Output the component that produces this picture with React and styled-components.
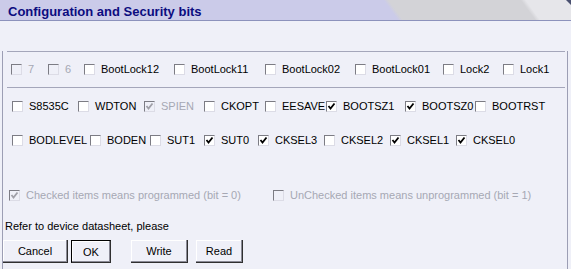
import styled, { createGlobalStyle } from 'styled-components';

const GlobalStyle = createGlobalStyle`
  body {
    margin: 0;
    background: #eff0f8;
    font-family: "Liberation Sans", Arial, sans-serif;
  }
`;

const lockBits = [
  { label: '7', w: 37, disabled: true },
  { label: '6', w: 36, disabled: true },
  { label: 'BootLock12', w: 90 },
  { label: 'BootLock11', w: 91 },
  { label: 'BootLock02', w: 90 },
  { label: 'BootLock01', w: 88 },
  { label: 'Lock2', w: 60 },
  { label: 'Lock1' }
];

const fuseHigh = [
  { label: 'S8535C', w: 66 },
  { label: 'WDTON', w: 66 },
  { label: 'SPIEN', w: 60, checked: true, disabled: true },
  { label: 'CKOPT', w: 61 },
  { label: 'EESAVE', w: 61 },
  { label: 'BOOTSZ1', w: 79, checked: true },
  { label: 'BOOTSZ0', w: 70, checked: true },
  { label: 'BOOTRST' }
];

const fuseLow = [
  { label: 'BODLEVEL', w: 78 },
  { label: 'BODEN', w: 60 },
  { label: 'SUT1', w: 54 },
  { label: 'SUT0', w: 54, checked: true },
  { label: 'CKSEL3', w: 66, checked: true },
  { label: 'CKSEL2', w: 66 },
  { label: 'CKSEL1', w: 66, checked: true },
  { label: 'CKSEL0', checked: true }
];

const CheckBox = ({ checked, disabled }) => (
  <Box $disabled={disabled}>
    {checked && (
      <svg width="9" height="9" viewBox="0 0 9 9">
        <path
          d="M1.5 4 L3.5 6.5 L7.5 1.5"
          fill="none"
          stroke={disabled ? '#a0a0a8' : '#000'}
          strokeWidth="1.8"
        />
      </svg>
    )}
  </Box>
);

const Bit = ({ label, w, checked, disabled }) => (
  <Item $w={w}>
    <CheckBox checked={checked} disabled={disabled} />
    <Label $disabled={disabled}>{label}</Label>
  </Item>
);

const App = () => {
  return (
    <>
      <GlobalStyle />
      <Window>
        <TitleBar>
          <Title>Configuration and Security bits</Title>
          <Corner />
        </TitleBar>
        <Body>
          <LockGroup>
            <Row $h={35} $pl={4}>
              {lockBits.map((b) => (
                <Bit key={b.label} {...b} />
              ))}
            </Row>
          </LockGroup>
          <Row $h={34} $pl={9} $mt={1}>
            {fuseHigh.map((b) => (
              <Bit key={b.label} {...b} />
            ))}
          </Row>
          <Row $h={34} $pl={9}>
            {fuseLow.map((b) => (
              <Bit key={b.label} {...b} />
            ))}
          </Row>
          <Row $h={16} $pl={6} $mt={30}>
            <Bit w={264} label="Checked items means programmed (bit = 0)" checked disabled />
            <Bit label="UnChecked items means unprogrammed (bit = 1)" disabled />
          </Row>
          <Note>Refer to device datasheet, please</Note>
          <ButtonBar>
            <Button $w={65}>Cancel</Button>
            <Button $w={40} $ml={3} $default>OK</Button>
            <Button $w={57} $ml={20}>Write</Button>
            <Button $w={47} $ml={8}>Read</Button>
          </ButtonBar>
        </Body>
      </Window>
    </>
  );
};

const Window = styled.div`
  width: 571px;
  height: 269px;
  background: #eff0f8;
  overflow: hidden;
`;

const TitleBar = styled.div`
  position: relative;
  box-sizing: border-box;
  height: 21px;
  padding: 2px 0 0 8px;
  border-bottom: 1px solid #8c92bc;
  background: linear-gradient(
    54deg,
    #cbcbe9 0px,
    #cbcbe9 322px,
    #d3d3d7 326px,
    #d3d3d7 433px,
    #e6e6ea 437px
  );
`;

const Title = styled.div`
  font-size: 13px;
  font-weight: bold;
  line-height: 20px;
  color: #0c0c80;
  white-space: nowrap;
`;

const Corner = styled.div`
  position: absolute;
  top: 0;
  right: 0;
  width: 0;
  height: 0;
  border-top: 5px solid #4a5070;
  border-left: 5px solid transparent;
`;

const Body = styled.div`
  box-sizing: border-box;
  height: 246px;
  width: 566px;
  margin-left: 2px;
  border-left: 1px solid #9c9eb4;
  border-right: 1px solid #9c9eb4;
  border-bottom: 1px solid #8890b8;
`;

const LockGroup = styled.div`
  margin: 30px 2px 0 4px;
  border-top: 1px solid #a4a6ba;
  border-bottom: 1px solid #a4a6ba;
`;

const Row = styled.div`
  display: flex;
  align-items: center;
  height: ${(p) => p.$h}px;
  padding-left: ${(p) => p.$pl}px;
  margin-top: ${(p) => p.$mt || 0}px;
`;

const Item = styled.div`
  display: flex;
  align-items: center;
  flex: 0 0 ${(p) => (p.$w ? `${p.$w}px` : 'auto')};
  gap: 6px;
  white-space: nowrap;
`;

const Box = styled.span`
  box-sizing: border-box;
  display: flex;
  align-items: center;
  justify-content: center;
  width: 11px;
  height: 11px;
  border-top: 1px solid #7c7c84;
  border-left: 1px solid #7c7c84;
  border-right: 1px solid #dcdce6;
  border-bottom: 1px solid #dcdce6;
  background: ${(p) => (p.$disabled ? 'transparent' : '#ffffff')};
`;

const Label = styled.span`
  font-size: 11px;
  line-height: 13px;
  color: ${(p) => (p.$disabled ? '#a6a8b4' : '#000')};
`;

const Note = styled.div`
  margin-top: 16px;
  padding-left: 2px;
  font-size: 11px;
  line-height: 14px;
  color: #000;
`;

const ButtonBar = styled.div`
  display: flex;
  margin-top: 7px;
`;

const Button = styled.button`
  box-sizing: border-box;
  width: ${(p) => p.$w}px;
  height: 23px;
  margin-left: ${(p) => p.$ml || 0}px;
  padding: 0;
  font-family: "Liberation Sans", Arial, sans-serif;
  font-size: 11px;
  color: #000;
  background: #eff0f8;
  border: ${(p) => (p.$default ? '1px solid #000' : 'none')};
  border-right: 1px solid #303030;
  border-bottom: 1px solid #303030;
  box-shadow: inset -1px -1px 0 #8a8a96, inset 1px 1px 0 #ffffff;
`;

export default App;
